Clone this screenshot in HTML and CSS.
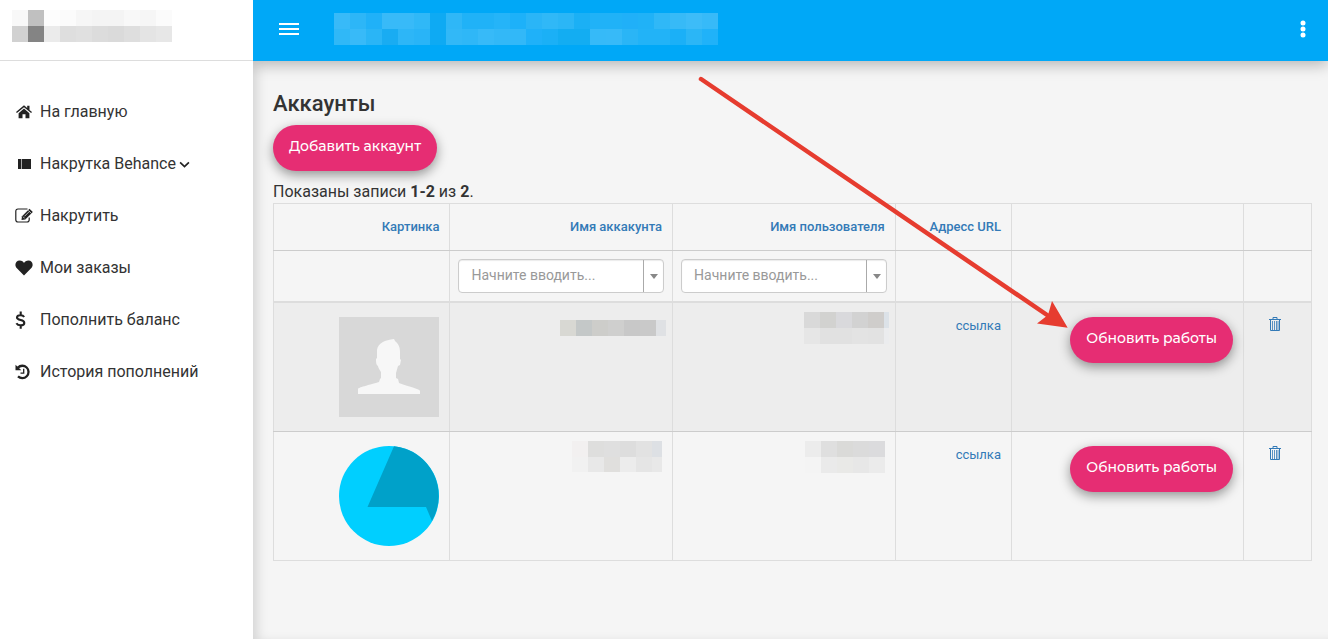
FILE: index.html
```html
<!DOCTYPE html>
<html lang="ru">
<head>
<meta charset="utf-8">
<meta name="viewport" content="width=device-width, initial-scale=1">
<title>Аккаунты</title>
<link rel="stylesheet" href="styles.css">
</head>
<body>
<div class="app">
  <aside class="sidebar">
    <div class="brand"><svg class="mosaic" width="160" height="32" data-rows="#f8f8f8 #c0c0c0 #fdfdfd #fbfbfb #f6f6f6 #f4f4f4 #f4f4f4 #f8f8f8 #f6f6f6 #fbfbfb / #d1d1d1 #848484 #ebebeb #dedede #e0e0e0 #dcdcdc #dadada #dedede #e4e4e4 #e7e7e7"></svg></div>
    <nav class="menu">
      <a class="menu-item" href="#"><svg class="icon" viewBox="0 0 18 18"><path d="M9 5.600 3.600 10.200V15.200h3.900v-4h3v4h3.900v-5z"/><path d="M9 2.300 1 9.100l.9 1L9 4.200l7.100 5.900.9-1-2.500-2.100V2.800h-2.300v2.200z"/></svg>На главную</a>
      <a class="menu-item" href="#"><svg class="icon" viewBox="0 0 18 18"><path d="M3 4h13v10H3z"/><path d="M6.500 4v10" stroke="#aaa"/></svg><span class="menu-text">Накрутка Behance<svg class="chevron" viewBox="0 0 10 10"><path d="m1 3 4 4 4-4" fill="none" stroke="#222" stroke-width="1.500"/></svg></span></a>
      <a class="menu-item" href="#"><svg class="icon" viewBox="0 0 18 18"><path d="M12.500 2H3Q.8 2 .8 4.200v8.600q0 2.200 2.200 2.200h9q2.200 0 2.200-2.200V10.500" fill="none" stroke="#222" stroke-width="1.200"/><path d="m7 9.200 7.500-7.500 3.300 3.300-7.500 7.500-3.800.6z"/><path d="m8 9.700 1.700 1.700M9.500 9.300l4.700-4.700M13.200 3.300l3 3" fill="none" stroke="#fff" stroke-width=".7"/></svg>Накрутить</a>
      <a class="menu-item" href="#"><svg class="icon" viewBox="0 0 18 18"><path d="M9 16.500 1.900 9.300C-1.200 6 .9 1.500 4.600 1.500 7 1.500 8.300 2.600 9 4c.8-1.400 2.200-2.500 4.500-2.500 3.700 0 5.700 4.500 2.600 7.800z"/></svg>Мои заказы</a>
      <a class="menu-item" href="#"><svg class="icon" viewBox="0 0 18 18"><path d="M9.100 5.900C8.500 4.800 7.300 4.200 5.500 4.200 3.300 4.200 2 5.100 2 6.600c0 1.600 1.600 2 3.600 2.500 2.200.5 3.700 1.100 3.700 2.800 0 1.500-1.400 2.400-3.600 2.400-2.100 0-3.500-.7-4.300-2M5.700.4v3.800M5.700 14.300V17.700" fill="none" stroke="#222" stroke-width="2.100"/></svg>Пополнить баланс</a>
      <a class="menu-item" href="#"><svg class="icon" viewBox="0 0 18 18"><path d="M2.900 4.600A6.200 6.200 0 1 1 3 13.400" fill="none" stroke="#222" stroke-width="2.300"/><path d="M.5 1.700V7.300h5.800z"/><path d="M8.700 5.700v4.400H5.500" fill="none" stroke="#222" stroke-width="1.300"/></svg>История пополнений</a>
    </nav>
  </aside>
  <div class="page">
    <header class="topbar">
      <button class="bar-button" type="button" aria-label="Меню"><svg width="20" height="12"><path d="M0 1h20M0 6h20M0 11h20" stroke="#fff" stroke-width="2"/></svg></button>
      <svg class="mosaic topbar-title" width="384" height="32" data-rows="#38baf8 #2db6f7 #20b1f8 #38baf8 #38baf8 #30b8f7 #0eaaf3 #2fb7f7 #20b2f7 #20b2f7 #25b4f8 #1db1f9 #2ab5f7 #30b8f7 #2bb6f6 #1bb0f5 #20b2f7 #20b2f7 #20b0f8 #20b2f7 #30b8f7 #37baf7 #3dbcf8 #37baf8 / #30b8f7 #38baf8 #2ab5f6 #19acf2 #2db6f7 #29b4f7 #0eaaf3 #32b8f7 #2fb7f7 #37baf8 #33b8f7 #32b8f8 #1fb1f9 #1bb0f6 #13adf2 #13adf2 #36baf8 #37baf8 #2ab5f6 #22b3f7 #22b3f7 #1bb0f7 #2bb6f6 #20b2f9"></svg>
      <button class="bar-button" type="button" aria-label="Ещё"><svg width="6" height="18" fill="#fff"><circle cx="3" cy="3" r="2.500"/><circle cx="3" cy="9" r="2.500"/><circle cx="3" cy="15" r="2.500"/></svg></button>
    </header>
    <main class="content">
      <h1 class="title">Аккаунты</h1>
      <button class="pill" type="button">Добавить аккаунт</button>
      <p class="summary">Показаны записи <b>1-2</b> из <b>2</b>.</p>
      <table class="grid">
        <colgroup><col class="c-image"><col class="c-name"><col class="c-name"><col class="c-url"><col class="c-action"><col class="c-delete"></colgroup>
        <thead>
          <tr>
            <th><a href="#">Картинка</a></th>
            <th><a href="#">Имя аккакунта</a></th>
            <th><a href="#">Имя пользователя</a></th>
            <th><a href="#">Адресс URL</a></th>
            <th></th><th></th>
          </tr>
          <tr class="filters">
            <td></td>
            <td><div class="picker"><select aria-label="Имя аккакунта"><option>Начните вводить...</option></select></div></td>
            <td><div class="picker"><select aria-label="Имя пользователя"><option>Начните вводить...</option></select></div></td>
            <td></td><td></td><td></td>
          </tr>
        </thead>
        <tbody>
          <tr>
            <td><svg class="avatar" viewBox="0 0 100 100"><path fill="#d8d8d8" d="M0 0h100v100H0z"/><path fill="#f7f7f7" d="M19 77v-5c0-1 3-2 21-7l1-3 1-1v-6c-2-3-3-5-3-6-2-1-2-4-2-7l1-1V33c1-7 8-10 17-11l1 2c4 3 5 7 5 11v7l1 1-1 5-2 1-2 7v5l2 1 1 4c11 4 21 6 21 8v3z"/></svg></td>
            <td class="masked masked-wide"><svg class="mosaic low" width="106" height="16" data-rows="#d8d8d3 #c4c8c8 #cdcdca #cfcfce #c8c8c8 #c9c9c9 #dfe1e4"></svg></td>
            <td class="masked masked-wide"><svg class="mosaic" width="85" height="32" data-rows="#d9d9d9 #d2d2d0 #d9d9dc #d2d2d2 #cfcdcb #dce2e8 / #e6e6e6 #e1e1e1 #e1e1e1 #e3e3e3 #e2e2e2 #ebecee"></svg></td>
            <td><a class="link" href="#">ссылка</a></td>
            <td><button class="pill" type="button">Обновить работы</button></td>
            <td class="center"><a class="trash" href="#" aria-label="Удалить"><svg viewBox="0 0 12 14"><path d="M0 2.500h12M4 2V.5h4V2M1.500 3v10.500h9V3" fill="none" stroke="#337ab7"/><path d="M3.500 4v9M5.500 4v9M7.500 4v9M9 4v9" stroke="#337ab7" stroke-width=".8"/></svg></a></td>
          </tr>
          <tr>
            <td><svg class="avatar" viewBox="0 0 100 100"><circle cx="50" cy="50" r="50" fill="#00cfff"/><path fill="#00a1c9" d="M55 .2A50 50 0 0 1 93 75L87 61H28.500z"/></svg></td>
            <td class="masked"><svg class="mosaic" width="90" height="31" data-rows="#f2f0f0 #dededd #dfdfdf #dddddd #e2e2e2 #dde0e4 / #f1f1f1 #e8e8e8 #e0dfdd #ececec #e5e5e5 #e8e8e8"></svg></td>
            <td class="masked"><svg class="mosaic" width="80" height="32" data-rows="#ececec #dfdfdf #dadad8 #dbdbdb #dbdbdd / #f4f4f4 #eaeaea #e9e9e7 #e7e7e7 #ebebeb"></svg></td>
            <td><a class="link" href="#">ссылка</a></td>
            <td><button class="pill" type="button">Обновить работы</button></td>
            <td class="center"><a class="trash" href="#" aria-label="Удалить"><svg viewBox="0 0 12 14"><path d="M0 2.500h12M4 2V.5h4V2M1.500 3v10.500h9V3" fill="none" stroke="#337ab7"/><path d="M3.500 4v9M5.500 4v9M7.500 4v9M9 4v9" stroke="#337ab7" stroke-width=".8"/></svg></a></td>
          </tr>
        </tbody>
      </table>
      <svg class="pointer" width="370" height="252" viewBox="0 0 370 252" aria-hidden="true"><path d="m3 3 349 238" stroke="#e63c2f" stroke-width="4.500" stroke-linecap="round"/><path fill="#e63c2f" d="m369.700 251.700-15.700-26.700-4 14-11 8.500z"/></svg>
    </main>
  </div>
</div>
<script src="script.js"></script>
</body>
</html>
```
FILE: styles.css
```css
* { box-sizing: border-box; }

body {
  margin: 0;
  background: #f5f5f5;
  color: #333;
  font: 16px/20px Roboto, "Liberation Sans", sans-serif;
}

a { color: #337ab7; text-decoration: none; }
svg { display: block; }

.app {
  display: grid;
  grid-template-columns: 253px minmax(0, 1fr);
  min-height: 100vh;
}

.sidebar {
  z-index: 1;
  background: #fff;
}

.page { box-shadow: inset 8px 0 12px -4px rgba(0, 0, 0, .14); }

.brand {
  height: 61px;
  padding: 10px 12px;
  border-bottom: 1px solid #ddd;
}

.menu { padding-top: 25px; }

.menu-item {
  display: flex;
  align-items: center;
  gap: 7px;
  height: 52px;
  padding-left: 15px;
  color: #333;
}

.menu-text { display: flex; align-items: center; gap: 3px; }
.icon { width: 18px; height: 18px; fill: #222; }
.chevron { width: 11px; height: 11px; }

.topbar {
  display: flex;
  align-items: center;
  height: 61px;
  padding: 0 12px 3px 16px;
  background: #00a8f7;
  box-shadow: 0 4px 14px rgba(0, 0, 0, .26);
}

.bar-button {
  display: flex;
  padding: 8px 10px;
  border: 0;
  background: none;
}

.topbar-title { margin: 0 auto 0 25px; }

.content {
  position: relative;
  padding: 30px 16px 20px 20px;
}

.title {
  margin: 0 0 8px;
  font-size: 22px;
  line-height: 26px;
  font-weight: 500;
}

.pill {
  height: 46px;
  padding: 0 16px 4px;
  border: 0;
  border-radius: 23px;
  background: #e62d73;
  box-shadow: 0 4px 12px rgba(0, 0, 0, .4);
  color: #fff;
  font: 500 14px/20px Montserrat, "Noto Sans", sans-serif;
  white-space: nowrap;
}

.summary { margin: 11px 0 1px; }

.grid {
  width: 100%;
  table-layout: fixed;
  border-collapse: collapse;
  font-size: 13px;
  line-height: 20px;
  text-align: right;
}

.c-image { width: 17%; }
.c-name { width: 21.450%; }
.c-url { width: 11.200%; }
.c-action { width: 22.350%; }
.c-delete { width: 6.550%; }

.grid th,
.grid td {
  padding: 14px 10px;
  border: 1px solid #ddd;
  vertical-align: top;
}

.grid th {
  padding: 13px 10px;
  border-bottom-color: #ccc;
  font-weight: 500;
}

.grid .filters td {
  padding: 8px;
  border-bottom: 2px solid #ddd;
}

.grid tbody tr:nth-child(odd) { background: #ededed; }
.grid tbody tr:nth-child(odd) td { border-bottom-color: #ccc; }
.grid td.center { padding-right: 14px; text-align: center; }
.grid td.masked { padding-top: 9px; }
.grid td.masked-wide { padding-right: 6px; }

.masked .mosaic { margin-left: auto; }
.masked .low { margin-top: 8px; }
.avatar { width: 100px; height: 100px; margin-left: auto; }
.link { display: block; line-height: 18px; }
.trash { display: inline-block; width: 12px; }

.picker {
  position: relative;
}

.picker select {
  display: block;
  width: 100%;
  height: 34px;
  padding: 0 32px 2px 12px;
  border: 1px solid #ccc;
  border-radius: 4px;
  background: #fff;
  box-shadow: inset 0 1px 1px rgba(0, 0, 0, .08);
  color: #999;
  font: 14px/20px Roboto, "Liberation Sans", sans-serif;
  appearance: none;
}

.picker::before {
  content: "";
  position: absolute;
  top: 1px;
  bottom: 1px;
  right: 20px;
  border-left: 1px solid #aaa;
}

.picker::after {
  content: "";
  position: absolute;
  top: 15px;
  right: 6px;
  border: 4px solid transparent;
  border-top: 5px solid #888;
  border-bottom: 0;
}

.pointer {
  position: absolute;
  top: 15px;
  left: 445px;
  pointer-events: none;
}
```
FILE: script.js
```js
// Fills each masked area with 16px colour tiles.
document.querySelectorAll(".mosaic").forEach((svg) => {
  svg.dataset.rows.split(" / ").forEach((row, y) => {
    row.split(" ").forEach((color, x) => {
      const tile = document.createElementNS("http://www.w3.org/2000/svg", "rect");
      tile.setAttribute("x", x * 16);
      tile.setAttribute("y", y * 16);
      tile.setAttribute("width", 16);
      tile.setAttribute("height", 16);
      tile.setAttribute("fill", color);
      svg.append(tile);
    });
  });
});
```
